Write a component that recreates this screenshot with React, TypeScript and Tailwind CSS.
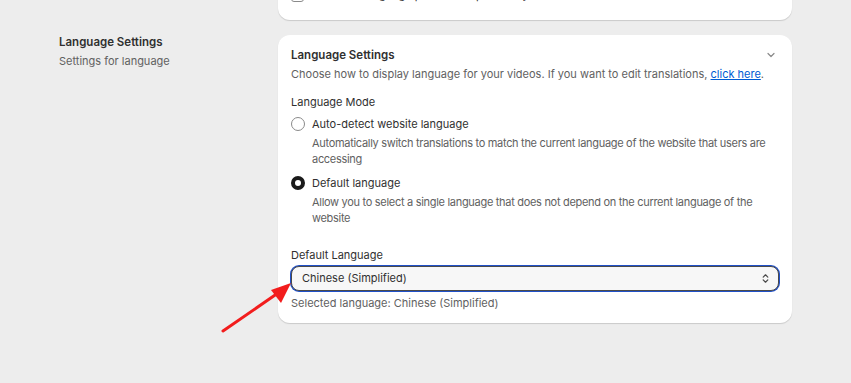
import { useState } from "react";

const modes = [
  {
    value: "auto",
    label: "Auto-detect website language",
    help: ["Automatically switch translations to match the current language of the website that users are", "accessing"],
  },
  {
    value: "default",
    label: "Default language",
    help: ["Allow you to select a single language that does not depend on the current language of the", "website"],
  },
];

function Radio({ checked }: { checked: boolean }) {
  return (
    <span
      className={
        checked
          ? "w-[14px] h-[14px] rounded-full border-[4px] border-[#1a1a1a] bg-white shrink-0"
          : "w-[14px] h-[14px] rounded-full border border-[#8a8a8a] bg-white shrink-0"
      }
    />
  );
}

export default function App() {
  const [mode, setMode] = useState("default");
  const [language, setLanguage] = useState("Chinese (Simplified)");

  return (
    <div
      className="relative w-[851px] h-[383px] overflow-hidden bg-[#ededed] text-[11px] text-[#303030]"
      style={{ fontFamily: "Inter, 'Noto Sans', sans-serif" }}
    >
      <div className="px-[59px]">
        {/* previous card, scrolled off */}
        <div className="ml-[219px] -mt-[26px] bg-white rounded-b-xl shadow-[0_1px_1px_rgba(0,0,0,0.15)] px-[13px] pt-3 pb-4">
          <div className="flex items-center gap-2 h-[18px]">
            <span className="w-[13px] h-[13px] rounded-[3px] border border-[#8a8a8a]" />
            <span className="text-[#303030]">Show the language picker on top of every video</span>
          </div>
        </div>

        <div className="flex mt-[15px]">
          <div className="w-[219px] -mt-[3px]">
            <h3 className="font-semibold text-[11.5px] leading-5">Language Settings</h3>
            <p className="text-[#616161] leading-5 -mt-px">Settings for language</p>
          </div>

          <div className="w-[514px] bg-white rounded-xl shadow-[0_1px_1px_rgba(0,0,0,0.15)] px-[13px] pt-[10px] pb-[10px]">
            <div className="flex items-center justify-between">
              <h2 className="font-semibold text-[11.5px] leading-5">Language Settings</h2>
              <svg className="w-3 h-3 mr-[2px] text-[#8a8a8a]" viewBox="0 0 12 12" fill="none">
                <path d="M3 4.5l3 3 3-3" stroke="currentColor" strokeWidth="1.2" strokeLinecap="round" strokeLinejoin="round" />
              </svg>
            </div>
            <p className="text-[#616161] leading-5 -mt-px whitespace-nowrap">
              Choose how to display language for your videos. If you want to edit translations,{" "}
              <a href="#" className="text-[#005bd3] underline">click here</a>.
            </p>

            <div className="mt-[8px] leading-5">Language Mode</div>
            <div className="flex flex-col gap-[6px] mt-[2px]">
              {modes.map((m) => (
                <label key={m.value} className="block cursor-pointer" onClick={() => setMode(m.value)}>
                  <div className="flex items-center gap-[7px] h-5">
                    <Radio checked={mode === m.value} />
                    <span>{m.label}</span>
                  </div>
                  <p className="pl-[21px] text-[#616161] leading-4 mt-[1px] tracking-[-0.3px]">
                    {m.help.map((line) => (
                      <span key={line} className="block whitespace-nowrap">{line}</span>
                    ))}
                  </p>
                </label>
              ))}
            </div>

            <div className="mt-[19px] leading-5">Default Language</div>
            <div className="relative mt-px">
              <select
                value={language}
                onChange={(e) => setLanguage(e.target.value)}
                className="appearance-none w-full h-[25px] rounded-lg bg-[#f7f7f7] border border-[#4a4a4a] shadow-[0_0_0_1px_#2050c8] pl-[10px] pr-8 text-[11px] text-[#303030] outline-none"
              >
                <option>Chinese (Simplified)</option>
                <option>Chinese (Traditional)</option>
                <option>English</option>
                <option>Japanese</option>
              </select>
              <svg className="absolute right-[7px] top-[6px] w-[13px] h-[13px] text-[#4a4a4a] pointer-events-none" viewBox="0 0 14 14" fill="none">
                <path d="M4.5 5.5L7 3l2.5 2.5M4.5 8.5L7 11l2.5-2.5" stroke="currentColor" strokeWidth="1.3" strokeLinecap="round" strokeLinejoin="round" />
              </svg>
            </div>
            <p className="text-[#616161] leading-5 mt-[2px]">Selected language: {language}</p>
          </div>
        </div>
      </div>

      {/* annotation arrow */}
      <svg className="absolute left-0 top-0 w-[851px] h-[383px] pointer-events-none" viewBox="0 0 851 383">
        <line x1="223" y1="331" x2="278" y2="293" stroke="#f21d1d" strokeWidth="3" strokeLinecap="round" />
        <polygon points="291,283 271,290 281,303" fill="#f21d1d" />
      </svg>
    </div>
  );
}
